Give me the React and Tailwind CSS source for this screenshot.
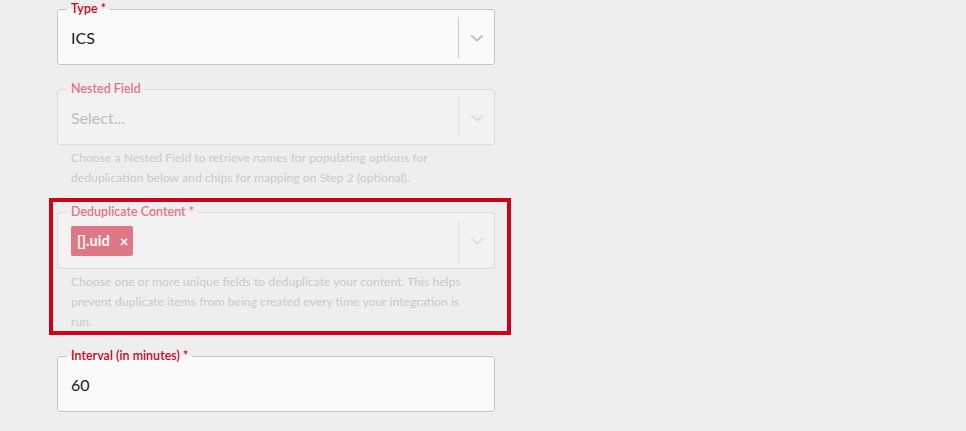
const FONT = { fontFamily: "Lato, 'Open Sans', sans-serif" }

function Chevron({ muted }) {
  return (
    <svg width="12" height="7" viewBox="0 0 12 7" fill="none">
      <path
        d="M1 1 L6 5.5 L11 1"
        stroke={muted ? "#dedede" : "#c2c2c2"}
        strokeWidth="2"
        strokeLinecap="round"
        strokeLinejoin="round"
      />
    </svg>
  )
}

function Field({ label, disabled, select, height = "h-[48px]", children }) {
  return (
    <fieldset
      className={`w-[438px] rounded-[3px] border ${
        disabled ? "border-[#dcdcdc] bg-[#f2f2f2]" : "border-[#c6c6c6] bg-[#fafafa]"
      }`}
    >
      <legend
        className={`ml-[9px] px-[4px] text-[12.5px] font-semibold leading-[14px] ${
          disabled ? "text-[#e27585]" : "text-[#d0021b]"
        }`}
      >
        {label}
      </legend>
      <div className={`flex ${height} pt-px pb-[6px]`}>
        <div className="flex flex-1 items-center pl-[13px]">{children}</div>
        {select && (
          <>
            <div className={`w-px self-stretch ${disabled ? "bg-[#e2e2e2]" : "bg-[#cccccc]"}`} />
            <div className="flex w-[35px] items-center justify-center pt-px">
              <Chevron muted={disabled} />
            </div>
          </>
        )}
      </div>
    </fieldset>
  )
}

function Help({ children }) {
  return (
    <p className="mt-[3px] w-[416px] pl-[14px] text-[12.2px] leading-[20px] text-[#cacaca]">{children}</p>
  )
}

export default function App() {
  return (
    <div className="min-h-screen bg-[#eeeeee] pt-[2px] pl-[57px]" style={FONT}>
      <Field label="Type *" select>
        <span className="text-[16px] text-[#1b1b2b]">ICS</span>
      </Field>

      <div className="mt-[17px]">
        <Field label="Nested Field" select disabled>
          <span className="text-[16px] text-[#bdbdbd]">Select...</span>
        </Field>
        <Help>
          Choose a Nested Field to retrieve names for populating options for deduplication below and chips for
          mapping on Step 2 (optional).
        </Help>
      </div>

      {/* highlighted field */}
      <div className="mt-[10px] -ml-[8px] h-[137px] w-[462px] border-4 border-[#d0021b] pt-[3px] pl-[4px]">
        <Field label="Deduplicate Content *" select disabled height="h-[49px]">
          <span className="flex h-[30px] items-center gap-[10px] rounded-[2px] bg-[#df7886] pl-[6px] pr-[5px] text-[14.5px] font-bold text-white">
            [].uid
            <span className="text-[15px] leading-none">×</span>
          </span>
        </Field>
        <Help>
          Choose one or more unique fields to deduplicate your content. This helps prevent duplicate items from
          being created every time your integration is run.
        </Help>
      </div>

      <div className="mt-[14px]">
        <Field label="Interval (in minutes) *">
          <span className="text-[16px] text-[#1b1b2b]">60</span>
        </Field>
      </div>
    </div>
  )
}
